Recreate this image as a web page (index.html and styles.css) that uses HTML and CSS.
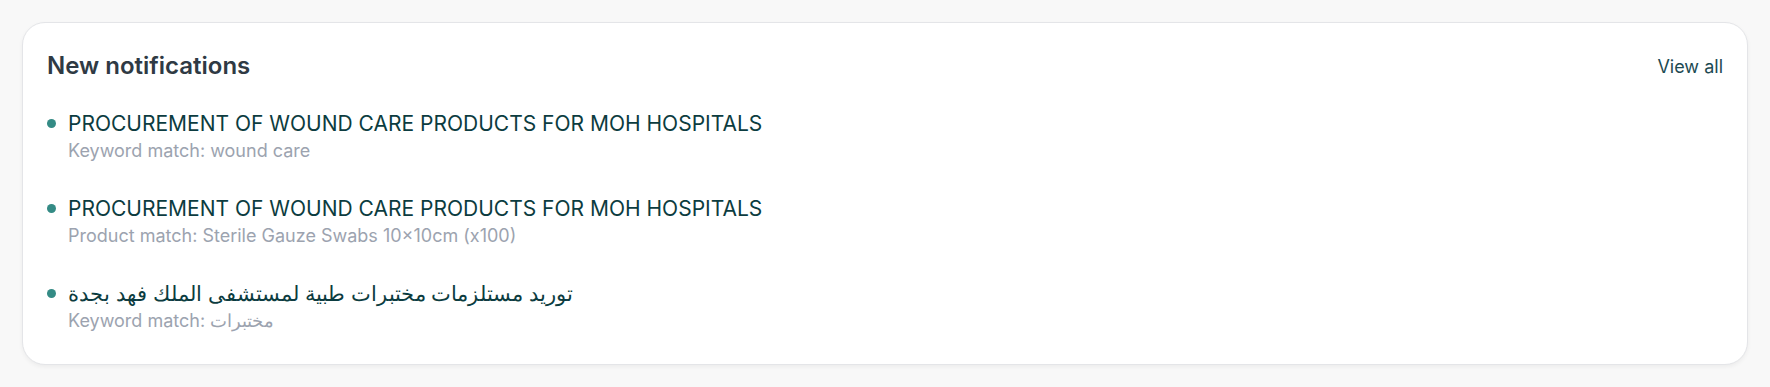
FILE: index.html
```html
<!DOCTYPE html>
<html lang="en">
<head>
<meta charset="UTF-8" />
<meta name="viewport" content="width=device-width, initial-scale=1" />
<title>Notifications</title>
<link rel="stylesheet" href="styles.css">
</head>
<body>

<div class="card">
  <div class="card-header">
    <h2 class="card-title">New notifications</h2>
    <a href="#" class="view-all">View all</a>
  </div>

  <ul class="notif-list">
    <li class="notif-item">
      <span class="dot"></span>
      <div class="notif-body">
        <div class="notif-title">PROCUREMENT OF WOUND CARE PRODUCTS FOR MOH HOSPITALS</div>
        <div class="notif-sub">Keyword match: wound care</div>
      </div>
    </li>
    <li class="notif-item">
      <span class="dot"></span>
      <div class="notif-body">
        <div class="notif-title">PROCUREMENT OF WOUND CARE PRODUCTS FOR MOH HOSPITALS</div>
        <div class="notif-sub">Product match: Sterile Gauze Swabs 10×10cm (x100)</div>
      </div>
    </li>
    <li class="notif-item">
      <span class="dot"></span>
      <div class="notif-body">
        <div class="notif-title">توريد مستلزمات مختبرات طبية لمستشفى الملك فهد بجدة</div>
        <div class="notif-sub">Keyword match: مختبرات</div>
      </div>
    </li>
  </ul>
</div>

</body>
</html>
```

FILE: styles.css
```css
  body, html {
    margin: 0;
    padding: 0;
    background: #f8f8f8;
    font-family: Inter, "Noto Sans", sans-serif;
  }

  body {
    padding: 22px;
  }

  .card {
    background: #fff;
    border: 1px solid #e4e5e8;
    border-radius: 23px;
    box-shadow: 0 2px 4px rgba(0,0,0,0.05);
    padding: 27px 24px 31px 24px;
  }

  .card-header {
    display: flex;
    justify-content: space-between;
    align-items: center;
  }

  .card-title {
    margin: 0;
    font-size: 24px;
    line-height: 32px;
    font-weight: 600;
    color: #2f3a44;
  }

  .view-all {
    font-size: 18px;
    color: #1d4a52;
    text-decoration: none;
  }

  .notif-list {
    list-style: none;
    margin: 28px 0 0 0;
    padding: 0;
    display: flex;
    flex-direction: column;
    gap: 32px;
  }

  .notif-item {
    display: flex;
    align-items: flex-start;
    gap: 12px;
  }

  .dot {
    flex: none;
    width: 9px;
    height: 9px;
    margin-top: 9px;
    border-radius: 50%;
    background: #348b85;
  }

  .notif-title {
    font-size: 21px;
    line-height: 28px;
    color: #0c3c40;
  }

  .notif-sub {
    margin-top: 1px;
    font-size: 18px;
    line-height: 24px;
    color: #9ca3af;
  }
```
